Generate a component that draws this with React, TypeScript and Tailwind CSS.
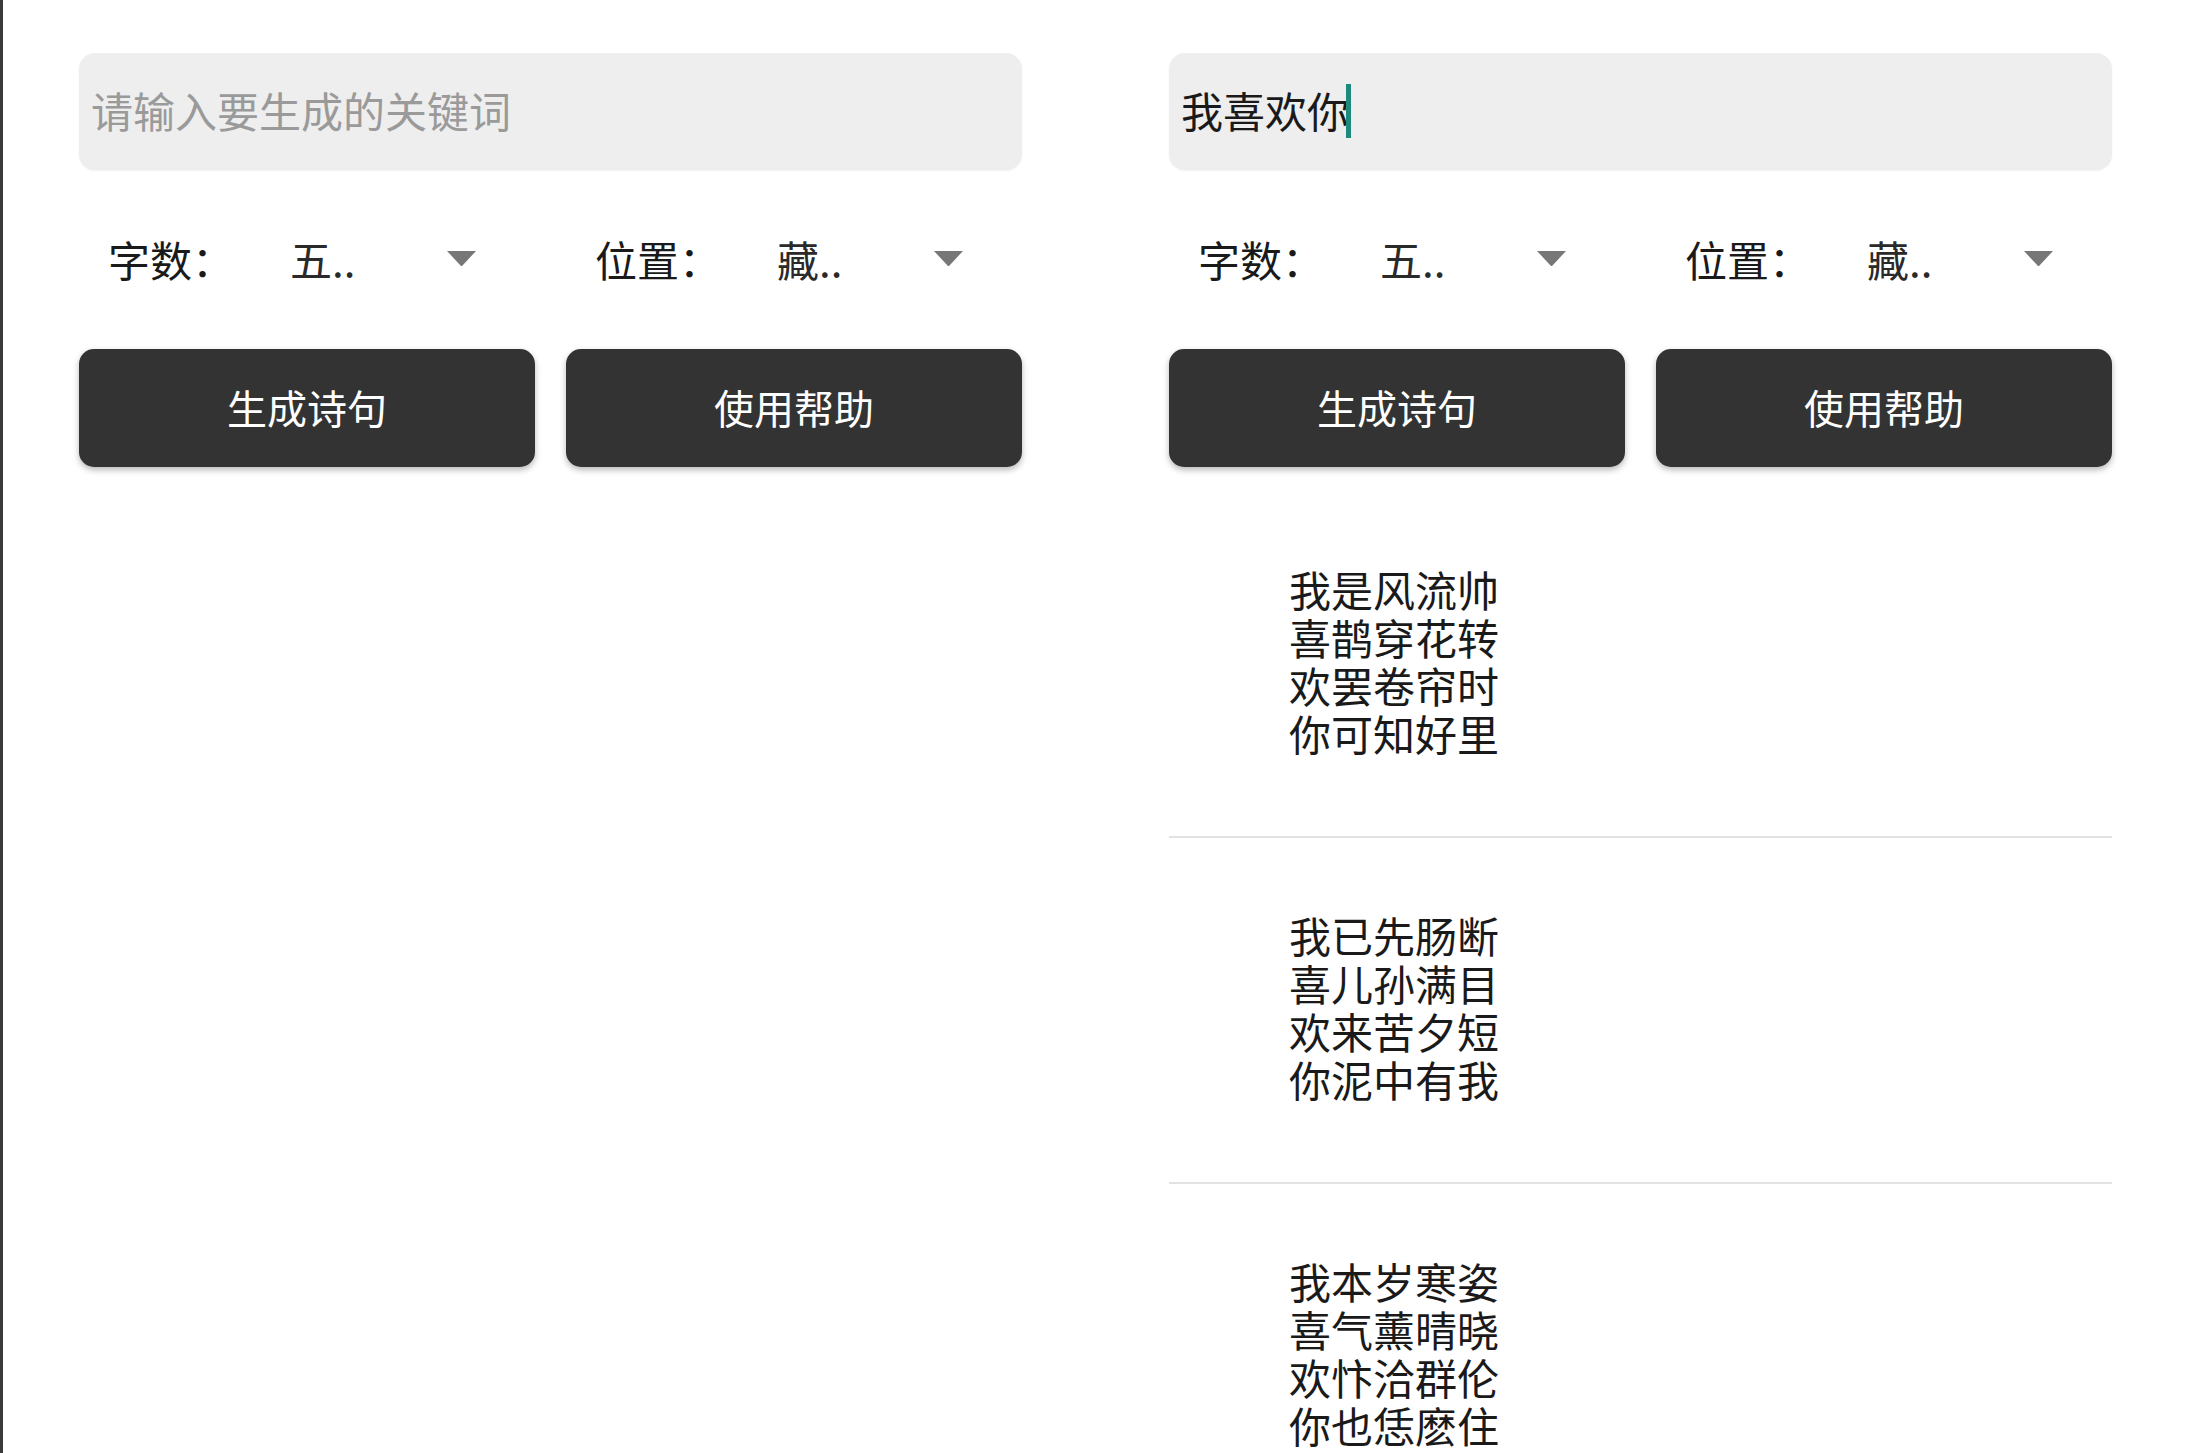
import React from "react"

const font = { fontFamily: '"Noto Sans CJK SC", "Noto Sans", sans-serif' }

const poems = [
  ["我是风流帅", "喜鹊穿花转", "欢罢卷帘时", "你可知好里"],
  ["我已先肠断", "喜儿孙满目", "欢来苦夕短", "你泥中有我"],
  ["我本岁寒姿", "喜气薰晴晓", "欢忭洽群伦", "你也恁麽住"],
]

function Caret() {
  return <span className="block w-[29px] h-0 border-l-[14.5px] border-r-[14.5px] border-t-[15px] border-l-transparent border-r-transparent border-t-[#777777]" />
}

function Picker({ label, value }: { label: string; value: string }) {
  return (
    <div className="flex items-center pl-[29px]">
      <span className="w-[182px] text-[#1a1a1a]">{label}</span>
      <span className="w-[157px] text-[#2a2a2a]">{value}</span>
      <Caret />
    </div>
  )
}

function Controls({ text }: { text?: string }) {
  return (
    <div className="w-[943px]">
      <div className="h-[117px] rounded-[16px] bg-[#eeeeee] flex items-center px-[12px] pb-[5px] text-[42px] shadow-[0_1px_2px_rgba(0,0,0,0.06)]">
        {text ? (
          <>
            <span className="text-[#1a1a1a]">{text}</span>
            <span className="block w-[5px] h-[54px] bg-[#1c8b7d] ml-[-3px] mt-[4px]" />
          </>
        ) : (
          <span className="text-[#9a9a9a]">请输入要生成的关键词</span>
        )}
      </div>

      <div className="mt-[48px] h-[80px] grid grid-cols-2 gap-[31px] items-center text-[42px]">
        <Picker label="字数：" value="五.." />
        <Picker label="位置：" value="藏.." />
      </div>

      <div className="mt-[51px] grid grid-cols-2 gap-[31px]">
        <button className="h-[118px] rounded-[15px] bg-[#333333] text-white text-[40px] pb-[3px] shadow-[0_3px_6px_rgba(0,0,0,0.28)]">生成诗句</button>
        <button className="h-[118px] rounded-[15px] bg-[#333333] text-white text-[40px] pb-[3px] shadow-[0_3px_6px_rgba(0,0,0,0.28)]">使用帮助</button>
      </div>
    </div>
  )
}

export default function App() {
  return (
    <div className="w-[2190px] h-[1453px] overflow-hidden bg-white flex" style={font}>
      <div className="w-[1090px] shrink-0 border-l-[3px] border-[#3a3a3a] pl-[76px] pt-[53px]">
        <Controls />
      </div>

      <div className="w-[1100px] shrink-0 pl-[79px] pt-[53px]">
        <Controls text="我喜欢你" />
        <div className="w-[943px] mt-[25px]">
          {poems.map((p, i) => (
            <div key={i} className="pt-[73px] pb-[79px] pl-[120px] border-b-2 border-[#e2e2e2] text-[42px] leading-[48px] text-[#1a1a1a]">
              {p.map((line, j) => (
                <div key={j}>{line}</div>
              ))}
            </div>
          ))}
        </div>
      </div>
    </div>
  )
}
